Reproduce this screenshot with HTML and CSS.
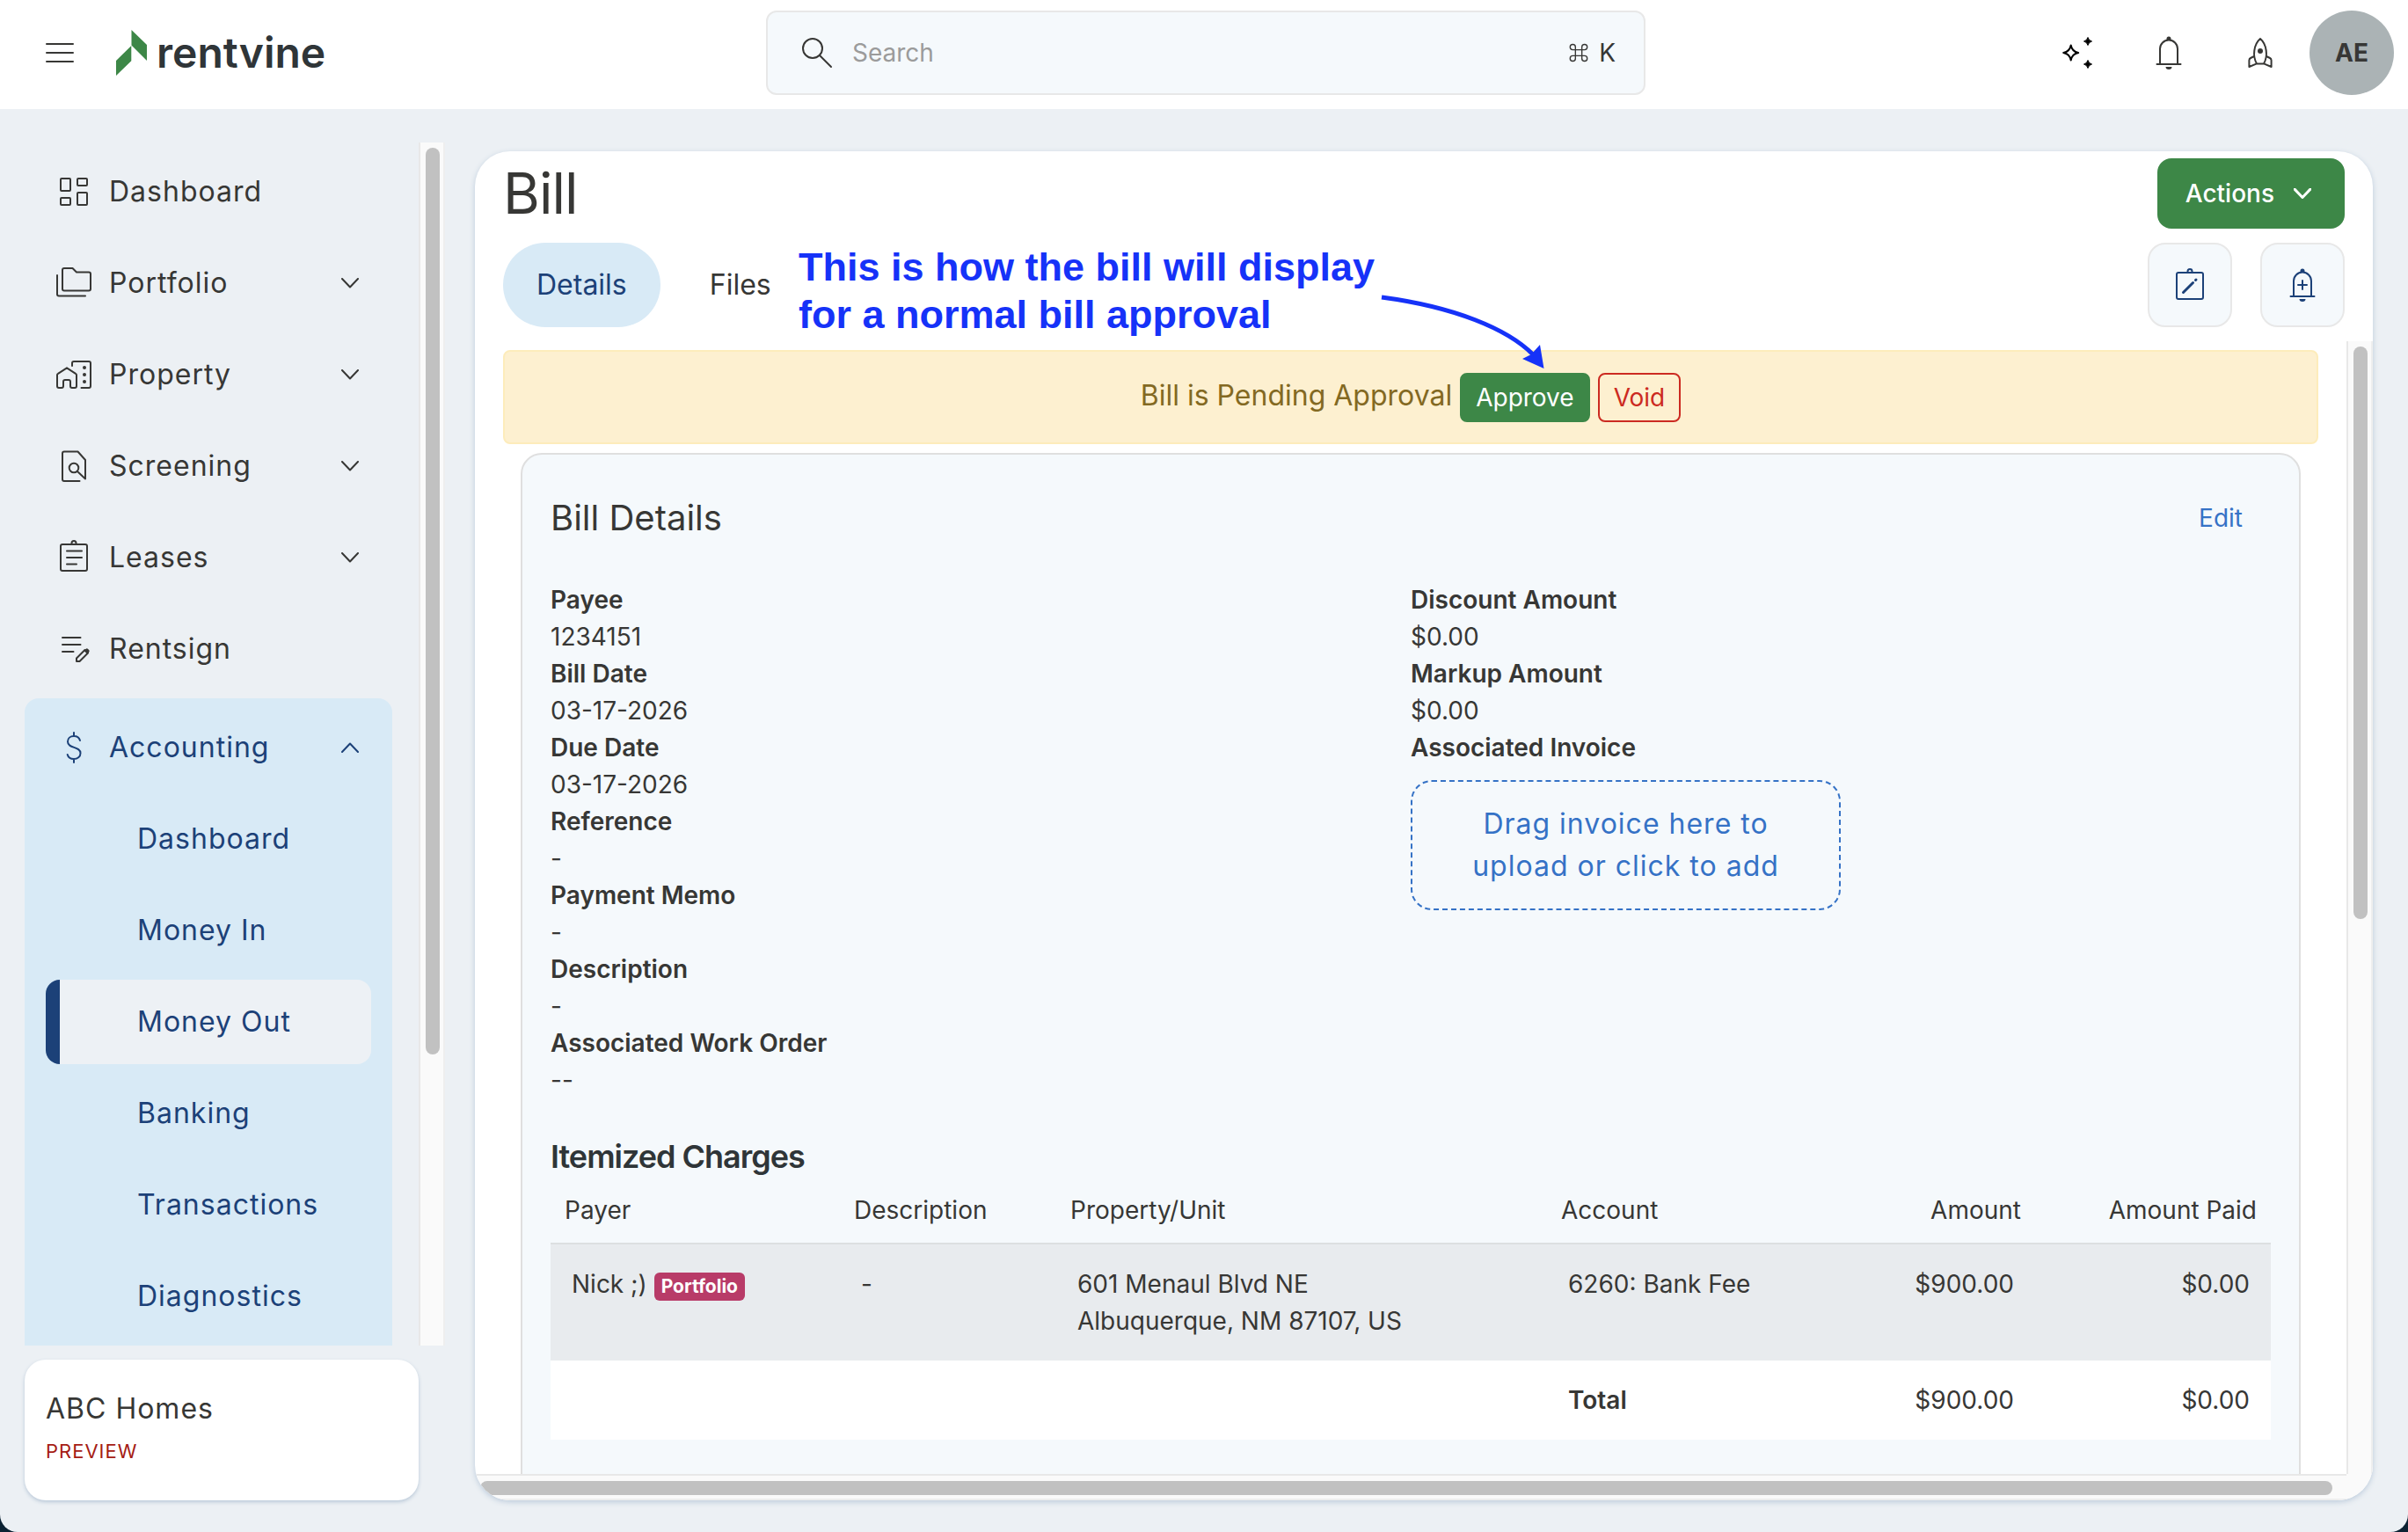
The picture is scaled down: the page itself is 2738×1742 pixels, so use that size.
FILE: index.html
```html
<!DOCTYPE html>
<html lang="en">
<head>
<meta charset="utf-8">
<meta name="viewport" content="width=device-width, initial-scale=1">
<title>Bill | Rentvine</title>
<link rel="stylesheet" href="styles.css">
</head>
<body>
<svg class="defs" aria-hidden="true">
  <symbol id="chevron" viewBox="0 0 20 12"><path d="M1 1l9 9.500 9-9.500"/></symbol>
  <symbol id="bell" viewBox="0 0 32 40"><path d="M6 33V15.500a10 10 0 0 1 20 0V33M2.500 33h27"/><path class="fill" d="M16 1.500a2.500 2.500 0 0 1 2.500 2.500v1.500h-5V4a2.500 2.500 0 0 1 2.500-2.500zM12.500 36h7a3.500 3 0 0 1-7 0z"/></symbol>
</svg>
<div class="app">
  <header class="topbar">
    <div class="brand">
      <button class="icon-button" aria-label="Toggle menu"><svg class="line-icon" width="32" height="24" viewBox="0 0 32 24"><path d="M1 2h30M1 12h30M1 22h30"/></svg></button>
      <a class="logo" href="#" aria-label="rentvine">
        <svg width="36" height="52" viewBox="0 0 36 52"><path fill="#3d8747" d="M17.500 0L35 17v18L17.500 17.500zM0 35l17.300-17v17.300L0 52z"/></svg>
        <span>rentvine</span>
      </a>
    </div>
    <label class="search">
      <svg class="line-icon" width="36" height="36" viewBox="0 0 36 36"><circle cx="13" cy="13" r="11"/><path d="M21 21l13 13"/></svg>
      <input type="text" placeholder="Search" aria-label="Search">
      <span class="shortcut"><svg width="22" height="22" viewBox="0 0 24 24"><path d="M8 8V5a3.300 3.300 0 1 0-3.300 3.300h14.600A3.300 3.300 0 1 0 16 5v14a3.300 3.300 0 1 0 3.300-3.300H4.700A3.300 3.300 0 1 0 8 19z"/></svg>K</span>
    </label>
    <div class="tools">
      <button class="icon-button" aria-label="Assistant"><svg class="sparkle" width="36" height="40" viewBox="0 0 36 40"><path d="M10.700 11.500q1.300 7.200 8.500 8.500-7.200 1.300-8.500 8.500-1.300-7.200-8.500-8.500 7.200-1.300 8.500-8.500z"/><path class="solid" d="M30 2.500q.9 3.600 4.500 4.500-3.600.9-4.500 4.500-.9-3.600-4.500-4.500 3.600-.9 4.500-4.500zM30 28.500q.9 3.600 4.500 4.500-3.600.9-4.500 4.500-.9-3.600-4.500-4.500 3.600-.9 4.500-4.500z"/></svg></button>
      <button class="icon-button" aria-label="Notifications"><svg class="line-icon" width="32" height="40"><use href="#bell"/></svg></button>
      <button class="icon-button" aria-label="What's new"><svg class="line-icon" width="28" height="36" viewBox="0 0 28 36"><path d="M10 30.500C7.500 26 6.500 21 7.300 15.500 8 10 10.500 5 14 2c3.500 3 6 8 6.700 13.500.8 5.500-.2 10.500-2.700 15zM7 22l-4 2a3 3 0 0 0-1.600 2.500V34l8-3.300M21 22l4 2a3 3 0 0 1 1.600 2.500V34l-8-3.300"/><circle class="fill" cx="14" cy="16" r="3"/></svg></button>
      <button class="avatar">AE</button>
    </div>
  </header>

  <div class="workspace">
    <aside class="sidebar">
      <div class="nav-frame">
        <nav class="nav" aria-label="Main">
          <a class="nav-item" href="#"><svg class="line-icon" width="40" height="40" viewBox="0 0 40 40"><rect x="5" y="5" width="11" height="14" rx="1"/><rect x="24" y="5" width="11" height="8" rx="1"/><rect x="5" y="27" width="11" height="8" rx="1"/><rect x="24" y="21" width="11" height="14" rx="1"/></svg><span>Dashboard</span></a>
          <a class="nav-item" href="#"><svg class="line-icon" width="40" height="40" viewBox="0 0 40 40"><path d="M9 3h9.500l4.500 4.500h14a2 2 0 0 1 2 2V26.500a2 2 0 0 1-2 2H9a2 2 0 0 1-2-2V5a2 2 0 0 1 2-2zM1 11v21.500a2 2 0 0 0 2 2h30"/></svg><span>Portfolio</span><svg class="line-icon chevron"><use href="#chevron"/></svg></a>
          <a class="nav-item" href="#"><svg class="line-icon" width="40" height="40" viewBox="0 0 40 40"><path d="M1 20.500a2 2 0 0 1 1-1.700L12 12.300l10 6.500a2 2 0 0 1 1 1.700V33a2 2 0 0 1-2 2h-3a2 2 0 0 1-2-2v-5a2 2 0 0 0-2-2h-4a2 2 0 0 0-2 2v5a2 2 0 0 1-2 2H3a2 2 0 0 1-2-2zM18 10V7a2 2 0 0 1 2-2h17a2 2 0 0 1 2 2v26a2 2 0 0 1-2 2h-8.500"/><circle class="fill" cx="32" cy="12" r="2"/><circle class="fill" cx="32" cy="20" r="2"/><circle class="fill" cx="32" cy="28" r="2"/></svg><span>Property</span><svg class="line-icon chevron"><use href="#chevron"/></svg></a>
          <a class="nav-item" href="#"><svg class="line-icon" width="40" height="40" viewBox="0 0 40 40"><path d="M26.500 37H9a2 2 0 0 1-2-2V5.500a2 2 0 0 1 2-2h15.500L33 13v21.500l-9-8.500"/><circle cx="20" cy="22" r="5.300"/></svg><span>Screening</span><svg class="line-icon chevron"><use href="#chevron"/></svg></a>
          <a class="nav-item" href="#"><svg class="line-icon" width="40" height="40" viewBox="0 0 40 40"><rect x="5" y="5" width="30" height="30" rx="2"/><path d="M17.500 5V3.500a2.500 2.500 0 0 1 5 0V5M12 12.500h17M12 20h17M12 27.500h11"/></svg><span>Leases</span><svg class="line-icon chevron"><use href="#chevron"/></svg></a>
          <a class="nav-item" href="#"><svg class="line-icon" width="40" height="40" viewBox="0 0 40 40"><path d="M7 7h20.500M7 15h20.500M7 23h12.500M23 34v-3.500l9.500-9.500 3.500 3.500-9.500 9.500z"/><path class="fill" d="M31.500 22l2.300-2.300a1.500 1.500 0 0 1 2 0l1.500 1.500a1.500 1.500 0 0 1 0 2L35 25.500z"/></svg><span>Rentsign</span></a>
          <div class="nav-group">
            <a class="nav-item" href="#"><svg class="line-icon" width="40" height="40" viewBox="0 0 40 40"><path d="M27 12c-.8-3-3.700-5-7-5-4 0-7 2.500-7 6.200 0 8.300 14.500 5 14.500 13.300 0 4-3.500 6.500-7.500 6.500-3.600 0-6.500-2-7.300-5M20 3v4M20 33v4"/></svg><span>Accounting</span><svg class="line-icon chevron up"><use href="#chevron"/></svg></a>
            <a class="sub-item" href="#">Dashboard</a>
            <a class="sub-item" href="#">Money In</a>
            <a class="sub-item active" href="#" aria-current="page">Money Out</a>
            <a class="sub-item" href="#">Banking</a>
            <a class="sub-item" href="#">Transactions</a>
            <a class="sub-item" href="#">Diagnostics</a>
          </div>
        </nav>
        <div class="scroll-y nav-scroll"><div class="thumb"></div></div>
      </div>
      <div class="account-card">
        <span class="account-name">ABC Homes</span>
        <span class="account-mode">PREVIEW</span>
      </div>
    </aside>

    <main class="page">
      <div class="page-head">
        <div class="head-row">
          <h1>Bill</h1>
          <button class="actions">Actions <svg class="chevron"><use href="#chevron"/></svg></button>
        </div>
        <div class="head-row">
          <div class="tabs">
            <a class="tab current" href="#">Details</a>
            <a class="tab" href="#">Files</a>
          </div>
          <div class="head-tools">
            <button class="square" aria-label="Edit notes"><svg class="line-icon" width="36" height="40" viewBox="0 0 36 40"><rect x="3" y="6" width="30" height="30" rx="2"/><path d="M15.500 6V4.500a2.500 2.500 0 0 1 5 0V6"/><path class="thick" d="M10.500 28.500l11-11M24.500 14.500l.5-.5"/></svg></button>
            <button class="square" aria-label="Add reminder"><svg class="line-icon" width="32" height="40" viewBox="0 0 32 40"><use href="#bell"/><path d="M16 15v10M11 20h10"/></svg></button>
          </div>
        </div>
      </div>

      <div class="viewport">
        <div class="content">
          <div class="alert" role="alert">
            <span>Bill is Pending Approval</span>
            <button class="approve">Approve</button>
            <button class="void">Void</button>
          </div>
          <section class="bill">
            <div class="bill-title">
              <h2>Bill Details</h2>
              <a href="#">Edit</a>
            </div>
            <div class="fields">
              <dl>
                <dt>Payee</dt><dd>1234151</dd>
                <dt>Bill Date</dt><dd>03-17-2026</dd>
                <dt>Due Date</dt><dd>03-17-2026</dd>
                <dt>Reference</dt><dd>-</dd>
                <dt>Payment Memo</dt><dd>-</dd>
                <dt>Description</dt><dd>-</dd>
                <dt>Associated Work Order</dt><dd>--</dd>
              </dl>
              <dl>
                <dt>Discount Amount</dt><dd>$0.00</dd>
                <dt>Markup Amount</dt><dd>$0.00</dd>
                <dt>Associated Invoice</dt>
                <dd><button class="dropzone">Drag invoice here to upload or click to add</button></dd>
              </dl>
            </div>
            <h3>Itemized Charges</h3>
            <table>
              <colgroup><col class="c-payer"><col class="c-desc"><col class="c-prop"><col class="c-acct"><col class="c-amt"><col class="c-paid"></colgroup>
              <thead>
                <tr><th>Payer</th><th>Description</th><th>Property/Unit</th><th>Account</th><th class="num">Amount</th><th class="num">Amount Paid</th></tr>
              </thead>
              <tbody>
                <tr class="charge"><td>Nick ;) <span class="badge">Portfolio</span></td><td>-</td><td>601 Menaul Blvd NE<br>Albuquerque, NM 87107, US</td><td>6260: Bank Fee</td><td class="num">$900.00</td><td class="num">$0.00</td></tr>
                <tr class="total"><td></td><td></td><td></td><td><b>Total</b></td><td class="num">$900.00</td><td class="num">$0.00</td></tr>
              </tbody>
            </table>
          </section>
        </div>
        <div class="scroll-y page-scroll"><div class="thumb"></div></div>
        <div class="scroll-x"><div class="thumb"></div></div>
        <div class="scroll-corner"></div>
      </div>

      <p class="callout">This is how the bill will display<br>for a normal bill approval</p>
      <svg class="callout-arrow" width="200" height="100" viewBox="0 0 200 100"><path d="M2 14C85 25 145 50 174 79" fill="none" stroke="#1632f8" stroke-width="5"/><path d="M186.500 95l-24.500-11 10-5 10-11z" fill="#1632f8"/></svg>
    </main>
  </div>
</div>
</body>
</html>
```
FILE: styles.css
```css
* { box-sizing: border-box; }

:root {
  --ink: #373735;
  --navy: #1c4178;
  --link: #3572c6;
  --green: #3d8747;
  --mist: #ecf0f4;
  --ice: #f5f9fc;
  --sky: #d8eaf6;
  --line: #e8e8e8;
}

body {
  margin: 0;
  background: #0c2233;
  color: var(--ink);
  font-family: Inter, "Liberation Sans", sans-serif;
  font-size: 28px;
  line-height: 42px;
}

a { color: inherit; text-decoration: none; }

button {
  padding: 0;
  border: 0;
  background: none;
  color: inherit;
  font: inherit;
}

h1, h2, h3, p, dl, dd { margin: 0; }

.defs { position: absolute; width: 0; height: 0; }

.line-icon, .chevron {
  flex: none;
  fill: none;
  stroke: currentColor;
  stroke-width: 2;
  stroke-linecap: round;
  stroke-linejoin: round;
}

.fill { fill: currentColor; stroke: none; }
.thick { stroke-width: 3; }
.chevron { width: 20px; height: 12px; }
.chevron.up { transform: rotate(180deg); }

.app {
  display: flex;
  flex-direction: column;
  height: 100vh;
  overflow: hidden;
  border-radius: 0 0 20px 20px;
  background: var(--mist);
}

/* Top bar */
.topbar {
  display: grid;
  grid-template-columns: 1fr minmax(0, 1000px) 1fr;
  align-items: center;
  height: 124px;
  padding: 0 16px 4px 20px;
  background: #fff;
}

.brand { display: flex; align-items: center; gap: 16px; }

.icon-button {
  display: grid;
  place-items: center;
  width: 96px;
  height: 96px;
}

.logo {
  display: flex;
  align-items: center;
  gap: 10px;
  color: #2f3538;
  font-size: 48px;
  font-weight: 600;
  line-height: 52px;
}

.search {
  display: flex;
  align-items: center;
  gap: 22px;
  height: 96px;
  padding: 0 32px 0 38px;
  border: 2px solid var(--line);
  border-radius: 12px;
  background: var(--ice);
}

.search input {
  flex: 1;
  min-width: 0;
  padding: 0;
  border: 0;
  outline: 0;
  background: none;
  color: inherit;
  font: inherit;
}

.search input::placeholder { color: #9b9b9b; opacity: 1; }

.shortcut { display: flex; align-items: center; gap: 12px; }
.shortcut svg { fill: none; stroke: currentColor; stroke-width: 1.5; }

.tools { display: flex; justify-content: flex-end; gap: 8px; }

.sparkle { fill: none; stroke: #000; stroke-width: 2; stroke-linejoin: round; }
.sparkle .solid { fill: #000; stroke-width: 1; }

.avatar {
  width: 96px;
  height: 96px;
  border-radius: 50%;
  background: #abb3b5;
  font-weight: 700;
}

/* Sidebar */
.workspace {
  display: flex;
  flex: 1;
  gap: 34px;
  min-height: 0;
  padding: 38px 40px 36px 28px;
}

.sidebar {
  display: flex;
  flex-direction: column;
  flex: none;
  gap: 16px;
  width: 478px;
  font-size: 32px;
  letter-spacing: 1px;
}

.nav-frame {
  display: flex;
  flex: 1;
  justify-content: space-between;
  min-height: 0;
}

.nav {
  display: flex;
  flex-direction: column;
  gap: 8px;
  width: 418px;
  padding-top: 8px;
  overflow: hidden;
}

.nav-item {
  display: flex;
  flex: none;
  align-items: center;
  gap: 20px;
  height: 96px;
  padding: 0 38px 0 36px;
}

.nav-item span { flex: 1; }

.nav-group {
  display: flex;
  flex: none;
  flex-direction: column;
  gap: 8px;
  padding: 8px 0 40px;
  border-radius: 16px;
  background: var(--sky);
  color: var(--navy);
}

.sub-item {
  height: 96px;
  margin: 0 24px;
  padding-left: 104px;
  line-height: 96px;
}

.sub-item.active {
  padding-left: 88px;
  border-left: 16px solid var(--navy);
  border-radius: 16px;
  background: #edf1f5;
}

.account-card {
  display: flex;
  flex-direction: column;
  gap: 6px;
  width: 448px;
  height: 160px;
  padding: 35px 24px;
  border-radius: 24px;
  background: #fff;
  box-shadow: 0 2px 4px #b9c8d8;
}

.account-mode { color: #a51c14; font-size: 22px; }

/* Scroll bars */
.scroll-y, .scroll-x, .scroll-corner { background: #fafafa; }

.scroll-y {
  flex: none;
  width: 30px;
  padding: 6px;
  border-left: 2px solid var(--line);
  border-right: 2px solid #eee;
}

.scroll-x {
  padding: 6px 16px 4px 6px;
  border-top: 2px solid var(--line);
  border-bottom: 2px solid #eee;
}

.thumb { width: 16px; border-radius: 8px; background: #c1c1c1; }
.nav-scroll .thumb { height: 76%; }
.page-scroll .thumb { height: 51%; }
.scroll-x .thumb { width: 100%; height: 16px; }

/* Page card */
.page {
  position: relative;
  display: flex;
  flex: 1;
  flex-direction: column;
  min-width: 0;
  margin-top: 10px;
  border-radius: 40px;
  background: #fff;
  box-shadow: 0 2px 6px #bccbdb;
}

.page-head {
  display: flex;
  flex-direction: column;
  gap: 16px;
  padding: 8px 32px 16px;
}

.head-row { display: flex; align-items: center; justify-content: space-between; }

h1 { font-size: 64px; font-weight: 400; line-height: 80px; }

.actions {
  display: flex;
  align-items: center;
  gap: 22px;
  height: 80px;
  padding: 0 38px 0 32px;
  border-radius: 16px;
  background: var(--green);
  color: #fff;
  font-weight: 500;
}

.actions .chevron { stroke-width: 3; }

.tabs { display: flex; gap: 18px; }

.tab {
  height: 96px;
  padding: 0 38px;
  border-radius: 48px;
  font-size: 32px;
  line-height: 96px;
}

.tab.current { background: var(--sky); color: var(--navy); }

.head-tools { display: flex; gap: 32px; }

.square {
  display: grid;
  place-items: center;
  width: 96px;
  height: 96px;
  border: 2px solid var(--line);
  border-radius: 20px;
  background: var(--ice);
  color: var(--navy);
}

.viewport {
  display: grid;
  flex: 1;
  grid-template: minmax(0, 1fr) 30px / minmax(0, 1fr) 30px;
  min-height: 0;
  overflow: hidden;
  border-radius: 0 0 40px 40px;
}

.content {
  display: flex;
  flex-direction: column;
  gap: 10px;
  padding: 10px 32px 0;
  overflow: hidden;
}

.alert {
  display: flex;
  flex: none;
  align-items: center;
  justify-content: center;
  gap: 9px;
  height: 107px;
  border: 2px solid #fdecbb;
  border-radius: 8px;
  background: #fdf0d0;
  color: #836922;
  font-size: 32px;
}

.alert span { padding-bottom: 4px; }

.alert button {
  height: 56px;
  padding: 0 16px;
  border: 2px solid var(--green);
  border-radius: 8px;
  background: var(--green);
  color: #fff;
  font-size: 28px;
}

.alert .void { border-color: #cc2a21; background: none; color: #cc2a21; }

/* Bill details */
.bill {
  flex: none;
  min-height: 1400px;
  margin: 0 20px;
  padding: 48px 32px;
  border: 2px solid #dfdfdf;
  border-radius: 24px;
  background: var(--ice);
}

.bill-title {
  display: flex;
  align-items: center;
  justify-content: space-between;
  margin-bottom: 48px;
  padding-right: 32px;
}

.bill-title a { color: var(--link); }

h2 { font-size: 40px; font-weight: 400; line-height: 48px; }

.fields { display: grid; grid-template-columns: 1fr 1fr; }

dt { font-weight: 600; }

.dropzone {
  width: 50%;
  margin-top: 16px;
  padding: 24px 48px;
  border: 2px dashed var(--link);
  border-radius: 24px;
  color: var(--link);
  font-size: 32px;
  letter-spacing: 1px;
  line-height: 48px;
}

h3 {
  margin-top: 44px;
  margin-bottom: 2px;
  color: #2f3538;
  font-size: 36px;
  font-weight: 600;
  line-height: 44px;
}

h1, h3 { letter-spacing: -1px; }

table { width: 100%; border-collapse: collapse; table-layout: fixed; }

.c-payer { width: 329px; }
.c-desc { width: 246px; }
.c-prop { width: 558px; }
.c-amt { width: 234px; }
.c-paid { width: 268px; }

th {
  padding: 16px;
  border-bottom: 2px solid #dcdfe1;
  font-weight: 400;
  text-align: left;
}

td { padding: 24px; vertical-align: top; }

.num { text-align: right; }
.charge { background: #e8ebee; }
.total { background: #fff; }
b { font-weight: 600; }

.badge {
  display: inline-block;
  padding: 0 8px;
  border-radius: 6px;
  background: #b83b68;
  color: #fff;
  font-size: 21px;
  font-weight: 700;
  line-height: 32px;
}

/* Callout drawn over the page */
.callout {
  position: absolute;
  top: 105px;
  left: 368px;
  color: #1632f8;
  font-family: "Liberation Sans", Arial, sans-serif;
  font-size: 45px;
  font-weight: 700;
  line-height: 54px;
  white-space: nowrap;
}

.callout-arrow { position: absolute; top: 152px; left: 1029px; }
```
